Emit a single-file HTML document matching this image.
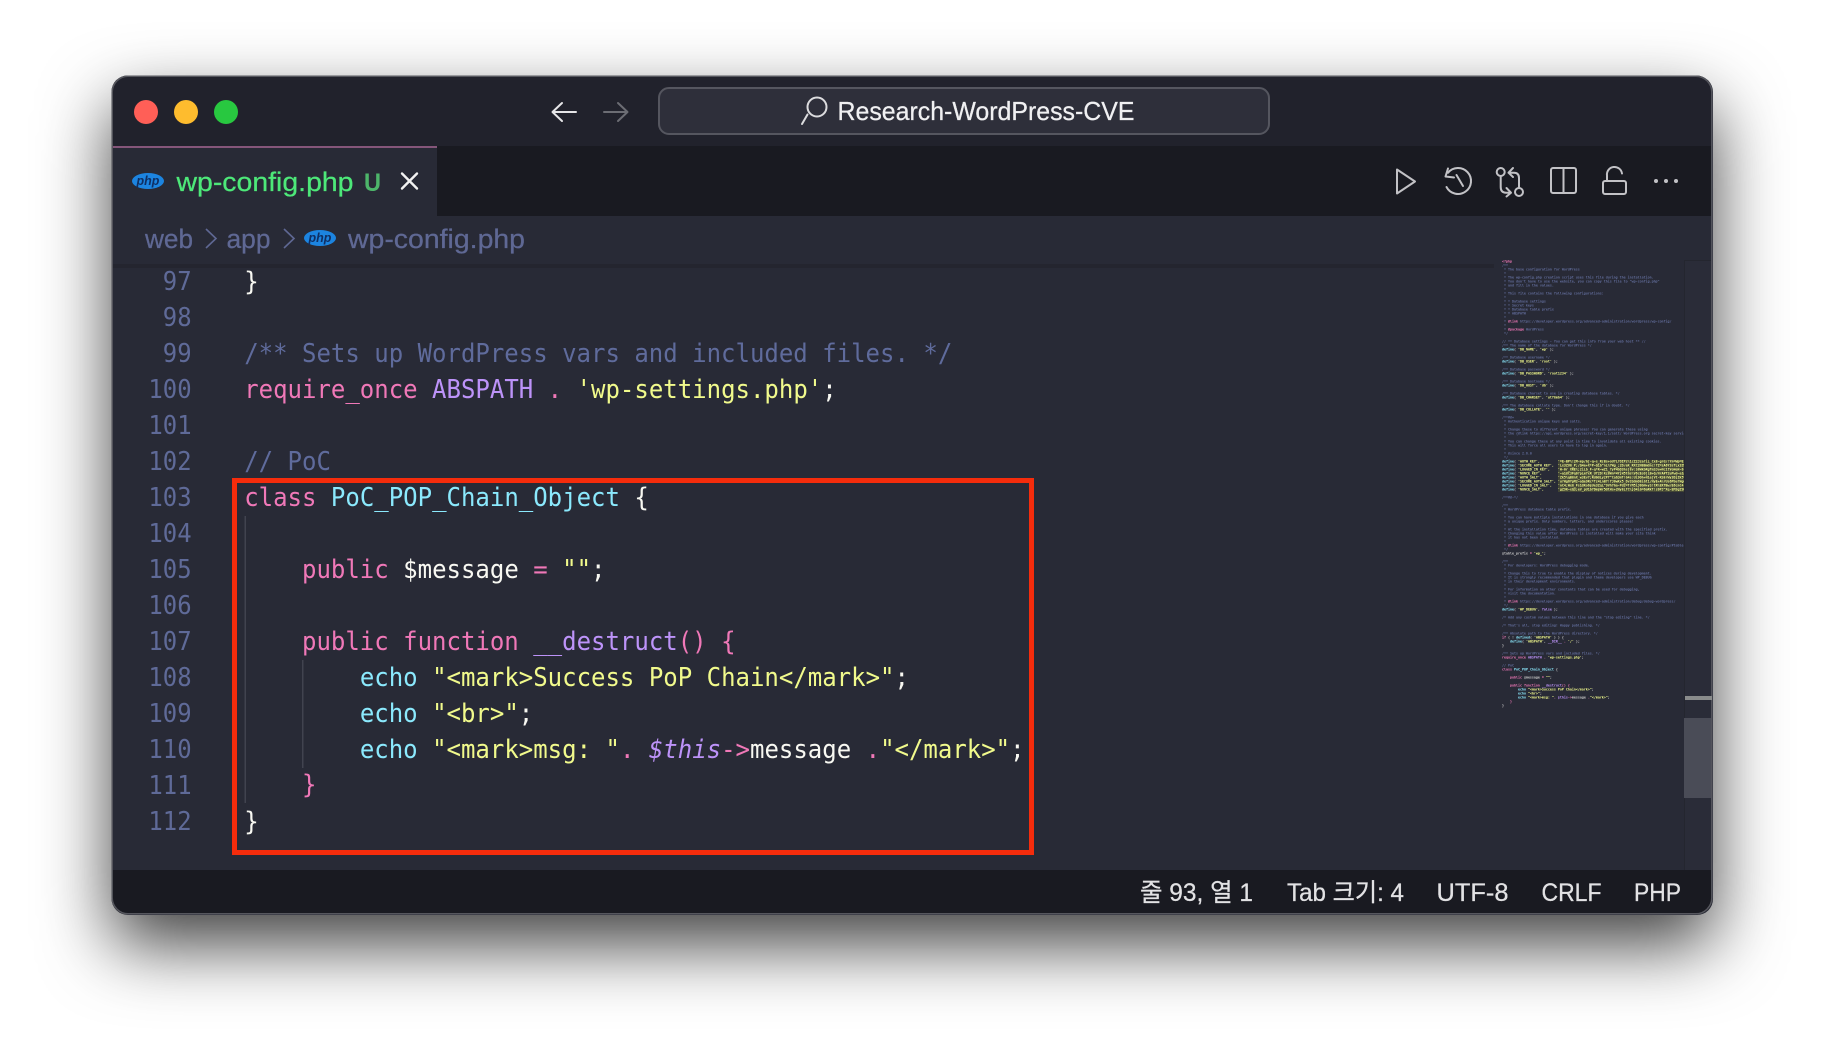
<!DOCTYPE html>
<html lang="en"><head><meta charset="utf-8"><title>wp-config.php</title>
<style>
html,body{margin:0;padding:0;background:#fff;width:1824px;height:1062px;overflow:hidden}
#win{position:absolute;left:111.5px;top:75.5px;width:1601px;height:839px;border-radius:16px;background:#282a36;box-shadow:0 30px 70px rgba(0,0,0,.75)}
svg{position:absolute;left:0;top:0}
text{white-space:pre}
.ui{font-family:"Liberation Sans","Noto Sans CJK KR",sans-serif}
.code{font-family:"DejaVu Sans Mono",monospace;font-size:26px}
.ln{fill:#5f6a98;text-anchor:end}
.p{fill:#f078b8}.y{fill:#f1fa8c}.c{fill:#5f6b9c}.w{fill:#f8f8f2}.b{fill:#8be9fd}.v{fill:#bd93f9}
.mini{font-family:"DejaVu Sans Mono",monospace;font-size:3.32px;font-weight:bold}
.mini .c{fill:#616c9a}.mini .w{fill:#c8c8c8}
.ic{fill:none;stroke:#c2c2c6;stroke-width:2;stroke-linecap:round;stroke-linejoin:round}
.status{font-size:25px;fill:#e2e2e4;stroke:#e2e2e4;stroke-width:.25px}
.crumb{font-size:27px;fill:#5f6894;stroke:#5f6894;stroke-width:.25px}
</style></head>
<body>
<div id="win"></div>
<svg width="1824" height="1062" viewBox="0 0 1824 1062" xmlns="http://www.w3.org/2000/svg">
<defs>
<clipPath id="w"><rect x="111.5" y="75.5" width="1601" height="839" rx="16"/></clipPath>
<clipPath id="m"><rect x="1500" y="256" width="184" height="460"/></clipPath>
</defs>
<g clip-path="url(#w)">
<rect x="111" y="75" width="1602" height="71" fill="#21222c"/>
<rect x="111" y="146" width="1602" height="70" fill="#191a21"/>
<rect x="111" y="148" width="326" height="68" fill="#282a36"/>
<rect x="111" y="146" width="326" height="2" fill="#85567a"/>
<rect x="111" y="216" width="1602" height="654" fill="#282a36"/>
<rect x="112" y="264" width="1382" height="4" fill="#24252f"/>
<rect x="1684" y="260" width="29" height="610" fill="#2a2c38"/>
<rect x="1684" y="260" width="1" height="610" fill="#24262f"/>
<rect x="1684" y="260" width="29" height="1" fill="#24262f"/>
<rect x="111" y="870" width="1602" height="45" fill="#191a21"/>
</g>
<rect x="112.2" y="76.2" width="1599.6" height="837.6" rx="16" fill="none" stroke="#56575e" stroke-width="1.5"/>

<!-- traffic lights -->
<circle cx="146" cy="112" r="12" fill="#ff5f57"/>
<circle cx="186" cy="112" r="12" fill="#febc2e"/>
<circle cx="226" cy="112" r="12" fill="#28c840"/>

<!-- nav -->
<path d="M576 112H553M562 103L552.5 112L562 121" fill="none" stroke="#e6e6e8" stroke-width="2" stroke-linecap="round" stroke-linejoin="round"/>
<path d="M604 112H627M618 103L627.5 112L618 121" fill="none" stroke="#6c6d74" stroke-width="2" stroke-linecap="round" stroke-linejoin="round"/>

<!-- search -->
<rect x="659" y="88" width="610" height="46" rx="10" fill="#2e2f3a" stroke="#55565f" stroke-width="2"/>
<circle cx="817" cy="107" r="9.5" fill="none" stroke="#dcdcde" stroke-width="2"/>
<path d="M807.5 114.5L802 124" fill="none" stroke="#dcdcde" stroke-width="2" stroke-linecap="round"/>
<text class="ui" x="837.5" y="120" font-size="26" fill="#f0f0f2" stroke="#f0f0f2" stroke-width=".25" textLength="297" lengthAdjust="spacingAndGlyphs">Research-WordPress-CVE</text>

<!-- tab -->
<ellipse cx="148" cy="181" rx="16" ry="8" fill="#1c84e0"/>
<text x="148" y="185" font-family="Liberation Sans,sans-serif" font-style="italic" font-weight="bold" font-size="12.5" fill="#0f2f63" text-anchor="middle">php</text>
<text class="ui" x="176.5" y="191" font-size="27" fill="#4de879" stroke="#4de879" stroke-width=".25" textLength="177" lengthAdjust="spacingAndGlyphs">wp-config.php</text>
<text class="ui" x="364" y="191" font-size="25" font-weight="bold" fill="#4db56a" textLength="17" lengthAdjust="spacingAndGlyphs">U</text>
<path d="M402 173.5L417 188.5M417 173.5L402 188.5" stroke="#f2f2f2" stroke-width="2.4" stroke-linecap="round"/>

<!-- actions -->
<path class="ic" d="M1397 169.5L1415 181.5L1397 193.5Z"/>
<path class="ic" d="M1448 172.7A13 13 0 1 1 1446.5 187"/>
<path class="ic" d="M1448 168.5L1445.5 176.5L1454 177.5M1456.5 175L1463 186"/>
<circle class="ic" cx="1500.7" cy="172" r="4"/>
<circle class="ic" cx="1519" cy="192" r="4"/>
<path class="ic" d="M1500.7 176.5V187Q1500.7 192.7 1506 192.7H1511M1506.5 188L1511 192.7L1506.5 196.5"/>
<path class="ic" d="M1519 187.5V178Q1519 172.7 1514 172.7H1508.5M1513 168L1508.5 172.7L1513 177"/>
<rect class="ic" x="1551" y="168" width="25" height="25" rx="2"/>
<path class="ic" d="M1563.5 168V193"/>
<rect class="ic" x="1603" y="181" width="23" height="13" rx="2"/>
<path class="ic" d="M1607 181V175.5A7.5 7.5 0 0 1 1622 173.5"/>
<circle cx="1656" cy="181" r="2" fill="#c2c2c6"/>
<circle cx="1666" cy="181" r="2" fill="#c2c2c6"/>
<circle cx="1676" cy="181" r="2" fill="#c2c2c6"/>

<!-- breadcrumb -->
<text class="ui crumb" x="145" y="248" textLength="48" lengthAdjust="spacingAndGlyphs">web</text>
<path d="M206 229L216 238.5L206 248" fill="none" stroke="#5f6894" stroke-width="1.6"/>
<text class="ui crumb" x="226.5" y="248" textLength="44" lengthAdjust="spacingAndGlyphs">app</text>
<path d="M284 229L294 238.5L284 248" fill="none" stroke="#5f6894" stroke-width="1.6"/>
<ellipse cx="320" cy="238" rx="16" ry="8" fill="#1c84e0"/>
<text x="320" y="242" font-family="Liberation Sans,sans-serif" font-style="italic" font-weight="bold" font-size="12.5" fill="#0f2f63" text-anchor="middle">php</text>
<text class="ui crumb" x="348" y="248" textLength="177" lengthAdjust="spacingAndGlyphs">wp-config.php</text>

<!-- indent guides -->
<rect x="244.5" y="516" width="1.5" height="287" fill="#41434f"/>
<rect x="302" y="660" width="1.5" height="108" fill="#41434f"/>

<!-- line numbers -->
<g class="code ln" transform="translate(191.6,0) scale(.92,1)">
<text y="290">97</text><text y="326">98</text><text y="362">99</text><text y="398">100</text><text y="434">101</text><text y="470">102</text><text y="506">103</text><text y="542">104</text><text y="578">105</text><text y="614">106</text><text y="650">107</text><text y="686">108</text><text y="722">109</text><text y="758">110</text><text y="794">111</text><text y="830">112</text>
</g>

<!-- code -->
<g class="code" transform="translate(244.2,0) scale(.9235,1)">
<text y="290" class="w">}</text>
<text y="362" class="c">/** Sets up WordPress vars and included files. */</text>
<text y="398"><tspan class="p">require_once</tspan> <tspan class="v">ABSPATH</tspan> <tspan class="p">.</tspan> <tspan class="y">'wp-settings.php'</tspan><tspan class="w">;</tspan></text>
<text y="470" class="c">// PoC</text>
<text y="506"><tspan class="p">class</tspan> <tspan class="b">PoC_POP_Chain_Object</tspan> <tspan class="w">{</tspan></text>
<text y="578">    <tspan class="p">public</tspan> <tspan class="w">$message</tspan> <tspan class="p">=</tspan> <tspan class="y">""</tspan><tspan class="w">;</tspan></text>
<text y="650">    <tspan class="p">public function</tspan> <tspan class="v">__destruct</tspan><tspan class="p">() {</tspan></text>
<text y="686">        <tspan class="b">echo</tspan> <tspan class="y">"&lt;mark&gt;Success PoP Chain&lt;/mark&gt;"</tspan><tspan class="w">;</tspan></text>
<text y="722">        <tspan class="b">echo</tspan> <tspan class="y">"&lt;br&gt;"</tspan><tspan class="w">;</tspan></text>
<text y="758">        <tspan class="b">echo</tspan> <tspan class="y">"&lt;mark&gt;msg: "</tspan><tspan class="p">.</tspan> <tspan class="v" font-style="italic">$this</tspan><tspan class="p">-&gt;</tspan><tspan class="w">message</tspan> <tspan class="p">.</tspan><tspan class="y">"&lt;/mark&gt;"</tspan><tspan class="w">;</tspan></text>
<text y="793">    <tspan class="p">}</tspan></text>
<text y="830" class="w">}</text>
</g>

<!-- red box -->
<rect x="234.5" y="480.5" width="797" height="372" fill="none" stroke="#f52c0c" stroke-width="5"/>

<!-- minimap -->
<g class="mini" clip-path="url(#m)">
<text x="1502" y="262.3" class="p">&lt;?php</text>
<text x="1502" y="266.3" class="c">/**</text>
<text x="1502" y="270.3" class="c"> * The base configuration for WordPress</text>
<text x="1502" y="274.3" class="c"> *</text>
<text x="1502" y="278.3" class="c"> * The wp-config.php creation script uses this file during the installation.</text>
<text x="1502" y="282.3" class="c"> * You don't have to use the website, you can copy this file to "wp-config.php"</text>
<text x="1502" y="286.3" class="c"> * and fill in the values.</text>
<text x="1502" y="290.3" class="c"> *</text>
<text x="1502" y="294.3" class="c"> * This file contains the following configurations:</text>
<text x="1502" y="298.3" class="c"> *</text>
<text x="1502" y="302.3" class="c"> * * Database settings</text>
<text x="1502" y="306.3" class="c"> * * Secret keys</text>
<text x="1502" y="310.3" class="c"> * * Database table prefix</text>
<text x="1502" y="314.3" class="c"> * * ABSPATH</text>
<text x="1502" y="318.3" class="c"> *</text>
<text x="1502" y="322.3" class="c"> * <tspan class="p">@link</tspan> https://developer.wordpress.org/advanced-administration/wordpress/wp-config/</text>
<text x="1502" y="326.3" class="c"> *</text>
<text x="1502" y="330.3" class="c"> * <tspan class="p">@package</tspan> WordPress</text>
<text x="1502" y="334.3" class="c"> */</text>
<text x="1502" y="342.3" class="c">// ** Database settings - You can get this info from your web host ** //</text>
<text x="1502" y="346.3" class="c">/** The name of the database for WordPress */</text>
<text x="1502" y="350.3"><tspan class="b">define</tspan><tspan class="w">( </tspan><tspan class="y">'DB_NAME'</tspan><tspan class="w">, </tspan><tspan class="y">'wp'</tspan><tspan class="w"> );</tspan></text>
<text x="1502" y="358.3" class="c">/** Database username */</text>
<text x="1502" y="362.3"><tspan class="b">define</tspan><tspan class="w">( </tspan><tspan class="y">'DB_USER'</tspan><tspan class="w">, </tspan><tspan class="y">'root'</tspan><tspan class="w"> );</tspan></text>
<text x="1502" y="370.3" class="c">/** Database password */</text>
<text x="1502" y="374.3"><tspan class="b">define</tspan><tspan class="w">( </tspan><tspan class="y">'DB_PASSWORD'</tspan><tspan class="w">, </tspan><tspan class="y">'root1234'</tspan><tspan class="w"> );</tspan></text>
<text x="1502" y="382.3" class="c">/** Database hostname */</text>
<text x="1502" y="386.3"><tspan class="b">define</tspan><tspan class="w">( </tspan><tspan class="y">'DB_HOST'</tspan><tspan class="w">, </tspan><tspan class="y">'db'</tspan><tspan class="w"> );</tspan></text>
<text x="1502" y="394.3" class="c">/** Database charset to use in creating database tables. */</text>
<text x="1502" y="398.3"><tspan class="b">define</tspan><tspan class="w">( </tspan><tspan class="y">'DB_CHARSET'</tspan><tspan class="w">, </tspan><tspan class="y">'utf8mb4'</tspan><tspan class="w"> );</tspan></text>
<text x="1502" y="406.3" class="c">/** The database collate type. Don't change this if in doubt. */</text>
<text x="1502" y="410.3"><tspan class="b">define</tspan><tspan class="w">( </tspan><tspan class="y">'DB_COLLATE'</tspan><tspan class="w">, </tspan><tspan class="y">''</tspan><tspan class="w"> );</tspan></text>
<text x="1502" y="418.3" class="c">/**#@+</text>
<text x="1502" y="422.3" class="c"> * Authentication unique keys and salts.</text>
<text x="1502" y="426.3" class="c"> *</text>
<text x="1502" y="430.3" class="c"> * Change these to different unique phrases! You can generate these using</text>
<text x="1502" y="434.3" class="c"> * the {@link https://api.wordpress.org/secret-key/1.1/salt/ WordPress.org secret-key service}.</text>
<text x="1502" y="438.3" class="c"> *</text>
<text x="1502" y="442.3" class="c"> * You can change these at any point in time to invalidate all existing cookies.</text>
<text x="1502" y="446.3" class="c"> * This will force all users to have to log in again.</text>
<text x="1502" y="450.3" class="c"> *</text>
<text x="1502" y="454.3" class="c"> * @since 2.6.0</text>
<text x="1502" y="458.3" class="c"> */</text>
<rect x="1558" y="460" width="126" height="32" fill="#5a5c34" opacity=".55"/>
<text x="1502" y="462.3"><tspan class="b">define</tspan><tspan class="w">( </tspan><tspan class="y">'AUTH_KEY',         '=E-BP%!2M-mp/G[-q~s_R(Bs+oU7L?OIPz%1cZ2Jza?iL_Cx8-grd/!Yn=Wp=E-BP%!2M-mp/G[-q~s_R(Bs+oU7L?OIPz'</tspan></text>
<text x="1502" y="466.3"><tspan class="b">define</tspan><tspan class="w">( </tspan><tspan class="y">'SECURE_AUTH_KEY',  'Lx3ZU8_P;/Q4e+X*P~Q1b^nL%7Wg_;2D/eK_RXC2N8Bm@nc!7Z=zA6Y3sTLx3ZU8_P;/Q4e+X*P~Q1b^nL%7Wg_;2D/eK'</tspan></text>
<text x="1502" y="470.3"><tspan class="b">define</tspan><tspan class="w">( </tspan><tspan class="y">'LOGGED_IN_KEY',    'H-0r_XRE%;2iLb_F-q*K~wZ1_7yP4bD3hs[8v:S8WkbRgTm3Ju+Nc1tVoHeH-0r_XRE%;2iLb_F-q*K~wZ1_7yP4bD3hs'</tspan></text>
<text x="1502" y="474.3"><tspan class="b">define</tspan><tspan class="w">( </tspan><tspan class="y">'NONCE_KEY',        '~a1@C3Fq0?pLm7xR_Uf2D!Kz8Wn=4YjH5tGs%V6cEo9]iB+Q/NrA#T2uPwd~a1@C3Fq0?pLm7xR_Uf2D!Kz8Wn=4YjH5tG'</tspan></text>
<text x="1502" y="478.3"><tspan class="b">define</tspan><tspan class="w">( </tspan><tspan class="y">'AUTH_SALT',        'Zk5%qB8nX_w3Ev7;Rd0@Ly2Pf^Ca6JmT!G4s:Ui9Oh+N1e[Vt-KS8rWy3DjZk5%qB8nX_w3Ev7;Rd0@Ly2Pf^Ca6JmT!G'</tspan></text>
<text x="1502" y="482.3"><tspan class="b">define</tspan><tspan class="w">( </tspan><tspan class="y">'SECURE_AUTH_SALT', 'u?Hg6YpM2~aQe9Rc*Tz4LnB7!fJ0wKx5_Dv3S@mO8iGt1/NyE+A%rUs6Pbu?Hg6YpM2~aQe9Rc*Tz4LnB7!fJ0wKx5_Dv3'</tspan></text>
<text x="1502" y="486.3"><tspan class="b">define</tspan><tspan class="w">( </tspan><tspan class="y">'LOGGED_IN_SALT',   'nC4;Wx8_Fs1@Ko6$Ue3ZqL^9Vh7Ga-Pd2=TrM5iJ0bN+yS!tR%8XfBw/E6cnC4;Wx8_Fs1@Ko6$Ue3ZqL^9Vh7Ga-Pd2='</tspan></text>
<text x="1502" y="490.3"><tspan class="b">define</tspan><tspan class="w">( </tspan><tspan class="y">'NONCE_SALT',       'gZ9K~xQ3;eV_pU1b7Dm$Wr5@tHs+2Ny8LfC%jO4iG=6aRkT!z0PJ^Xq-EM3gZ9K~xQ3;eV_pU1b7Dm$Wr5@tHs+2Ny8LfC'</tspan></text>
<text x="1502" y="498.3" class="c">/**#@-*/</text>
<text x="1502" y="506.3" class="c">/**</text>
<text x="1502" y="510.3" class="c"> * WordPress database table prefix.</text>
<text x="1502" y="514.3" class="c"> *</text>
<text x="1502" y="518.3" class="c"> * You can have multiple installations in one database if you give each</text>
<text x="1502" y="522.3" class="c"> * a unique prefix. Only numbers, letters, and underscores please!</text>
<text x="1502" y="526.3" class="c"> *</text>
<text x="1502" y="530.3" class="c"> * At the installation time, database tables are created with the specified prefix.</text>
<text x="1502" y="534.3" class="c"> * Changing this value after WordPress is installed will make your site think</text>
<text x="1502" y="538.3" class="c"> * it has not been installed.</text>
<text x="1502" y="542.3" class="c"> *</text>
<text x="1502" y="546.3" class="c"> * <tspan class="p">@link</tspan> https://developer.wordpress.org/advanced-administration/wordpress/wp-config/#table-prefix</text>
<text x="1502" y="550.3" class="c"> */</text>
<text x="1502" y="554.3"><tspan class="w">$table_prefix</tspan><tspan class="p"> = </tspan><tspan class="y">'wp_'</tspan><tspan class="w">;</tspan></text>
<text x="1502" y="562.3" class="c">/**</text>
<text x="1502" y="566.3" class="c"> * For developers: WordPress debugging mode.</text>
<text x="1502" y="570.3" class="c"> *</text>
<text x="1502" y="574.3" class="c"> * Change this to true to enable the display of notices during development.</text>
<text x="1502" y="578.3" class="c"> * It is strongly recommended that plugin and theme developers use WP_DEBUG</text>
<text x="1502" y="582.3" class="c"> * in their development environments.</text>
<text x="1502" y="586.3" class="c"> *</text>
<text x="1502" y="590.3" class="c"> * For information on other constants that can be used for debugging,</text>
<text x="1502" y="594.3" class="c"> * visit the documentation.</text>
<text x="1502" y="598.3" class="c"> *</text>
<text x="1502" y="602.3" class="c"> * <tspan class="p">@link</tspan> https://developer.wordpress.org/advanced-administration/debug/debug-wordpress/</text>
<text x="1502" y="606.3" class="c"> */</text>
<text x="1502" y="610.3"><tspan class="b">define</tspan><tspan class="w">( </tspan><tspan class="y">'WP_DEBUG'</tspan><tspan class="w">, </tspan><tspan class="v">false</tspan><tspan class="w"> );</tspan></text>
<text x="1502" y="618.3" class="c">/* Add any custom values between this line and the "stop editing" line. */</text>
<text x="1502" y="626.3" class="c">/* That's all, stop editing! Happy publishing. */</text>
<text x="1502" y="634.3" class="c">/** Absolute path to the WordPress directory. */</text>
<text x="1502" y="638.3"><tspan class="p">if</tspan><tspan class="w"> ( ! </tspan><tspan class="b">defined</tspan><tspan class="w">( </tspan><tspan class="y">'ABSPATH'</tspan><tspan class="w"> ) ) {</tspan></text>
<text x="1502" y="642.3">    <tspan class="b">define</tspan><tspan class="w">( </tspan><tspan class="y">'ABSPATH'</tspan><tspan class="w">, </tspan><tspan class="v">__DIR__</tspan><tspan class="p"> . </tspan><tspan class="y">'/'</tspan><tspan class="w"> );</tspan></text>
<text x="1502" y="646.3" class="w">}</text>
<text x="1502" y="654.3" class="c">/** Sets up WordPress vars and included files. */</text>
<text x="1502" y="658.3"><tspan class="p">require_once</tspan> <tspan class="v">ABSPATH</tspan><tspan class="p"> . </tspan><tspan class="y">'wp-settings.php'</tspan><tspan class="w">;</tspan></text>
<text x="1502" y="666.3" class="c">// PoC</text>
<text x="1502" y="670.3"><tspan class="p">class</tspan> <tspan class="b">PoC_POP_Chain_Object</tspan><tspan class="w"> {</tspan></text>
<text x="1502" y="678.3">    <tspan class="p">public</tspan> <tspan class="w">$message</tspan><tspan class="p"> = </tspan><tspan class="y">""</tspan><tspan class="w">;</tspan></text>
<text x="1502" y="686.3">    <tspan class="p">public function</tspan> <tspan class="v">__destruct</tspan><tspan class="p">() {</tspan></text>
<text x="1502" y="690.3">        <tspan class="b">echo</tspan> <tspan class="y">"&lt;mark&gt;Success PoP Chain&lt;/mark&gt;"</tspan><tspan class="w">;</tspan></text>
<text x="1502" y="694.3">        <tspan class="b">echo</tspan> <tspan class="y">"&lt;br&gt;"</tspan><tspan class="w">;</tspan></text>
<text x="1502" y="698.3">        <tspan class="b">echo</tspan> <tspan class="y">"&lt;mark&gt;msg: "</tspan><tspan class="p">. </tspan><tspan class="v">$this</tspan><tspan class="p">-&gt;</tspan><tspan class="w">message </tspan><tspan class="p">.</tspan><tspan class="y">"&lt;/mark&gt;"</tspan><tspan class="w">;</tspan></text>
<text x="1502" y="702.3">    <tspan class="p">}</tspan></text>
<text x="1502" y="706.3" class="w">}</text>
</g>

<!-- scrollbar -->
<rect x="1685" y="696" width="27" height="4" fill="#898b8b"/>
<rect x="1684" y="718" width="27" height="80" fill="#4a4c57"/>

<!-- status -->
<g class="ui status">
<text x="1140" y="901" textLength="113" lengthAdjust="spacingAndGlyphs">줄 93, 열 1</text>
<text x="1287" y="901" textLength="117" lengthAdjust="spacingAndGlyphs">Tab 크기: 4</text>
<text x="1436.5" y="901" textLength="72" lengthAdjust="spacingAndGlyphs">UTF-8</text>
<text x="1541.5" y="901" textLength="60" lengthAdjust="spacingAndGlyphs">CRLF</text>
<text x="1634" y="901" textLength="47" lengthAdjust="spacingAndGlyphs">PHP</text>
</g>
</svg>
</body></html>
